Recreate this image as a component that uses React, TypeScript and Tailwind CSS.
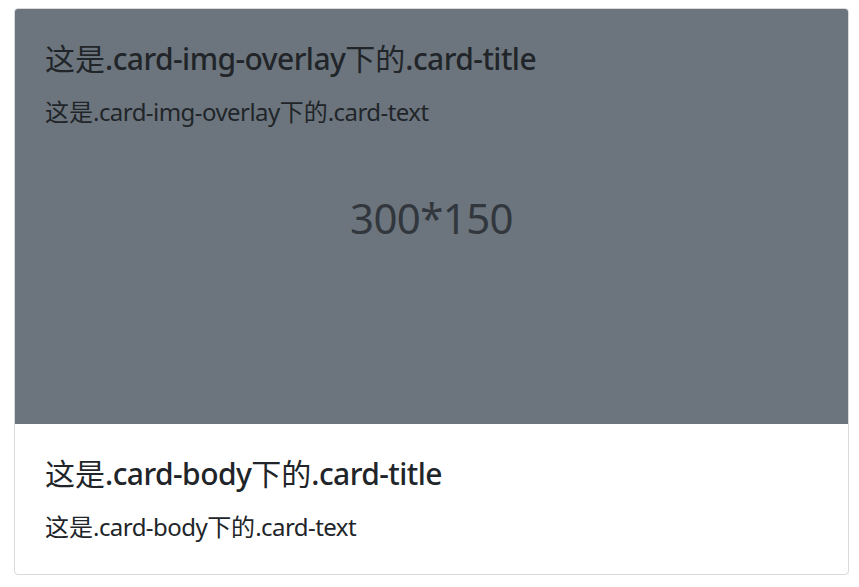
import React from 'react';

const FONT = "font-['Noto_Sans','Noto_Sans_CJK_SC',sans-serif]";

const Title = ({ part }: { part: string }) => (
  <h5 className="text-[30px] leading-[36px] font-medium tracking-[-0.55px] pt-[2px] mb-[17px]">
    <span className="font-normal tracking-normal">这是</span>.{part}
    <span className="font-normal tracking-normal">下的</span>.card-title
  </h5>
);

const Text = ({ part }: { part: string }) => (
  <p className="text-[24px] leading-[36px] tracking-[-0.55px]">
    <span className="tracking-normal">这是</span>.{part}
    <span className="tracking-normal">下的</span>.card-text
  </p>
);

const App = () => (
  <div className={`min-h-screen bg-white pt-[8px] pl-[14px] ${FONT} text-[#212529]`}>
    <div className="w-[835px] flex flex-col border border-[#d9d9d9] rounded-[4px] overflow-hidden bg-white">
      <div className="relative">
        <svg viewBox="0 0 300 150" className="block w-full h-[415px]" preserveAspectRatio="none">
          <rect width="300" height="150" fill="#6c757d" />
        </svg>
        <div className="absolute inset-0 flex items-center justify-center pt-[2px]">
          <span className="text-[42px] leading-none tracking-[-0.6px] text-[#32373d]">300*150</span>
        </div>
        <div className="absolute inset-0 px-[30px] pt-[30px]">
          <Title part="card-img-overlay" />
          <Text part="card-img-overlay" />
        </div>
      </div>
      <div className="px-[30px] pt-[30px] pb-[29px]">
        <Title part="card-body" />
        <Text part="card-body" />
      </div>
    </div>
  </div>
);

export default App;
